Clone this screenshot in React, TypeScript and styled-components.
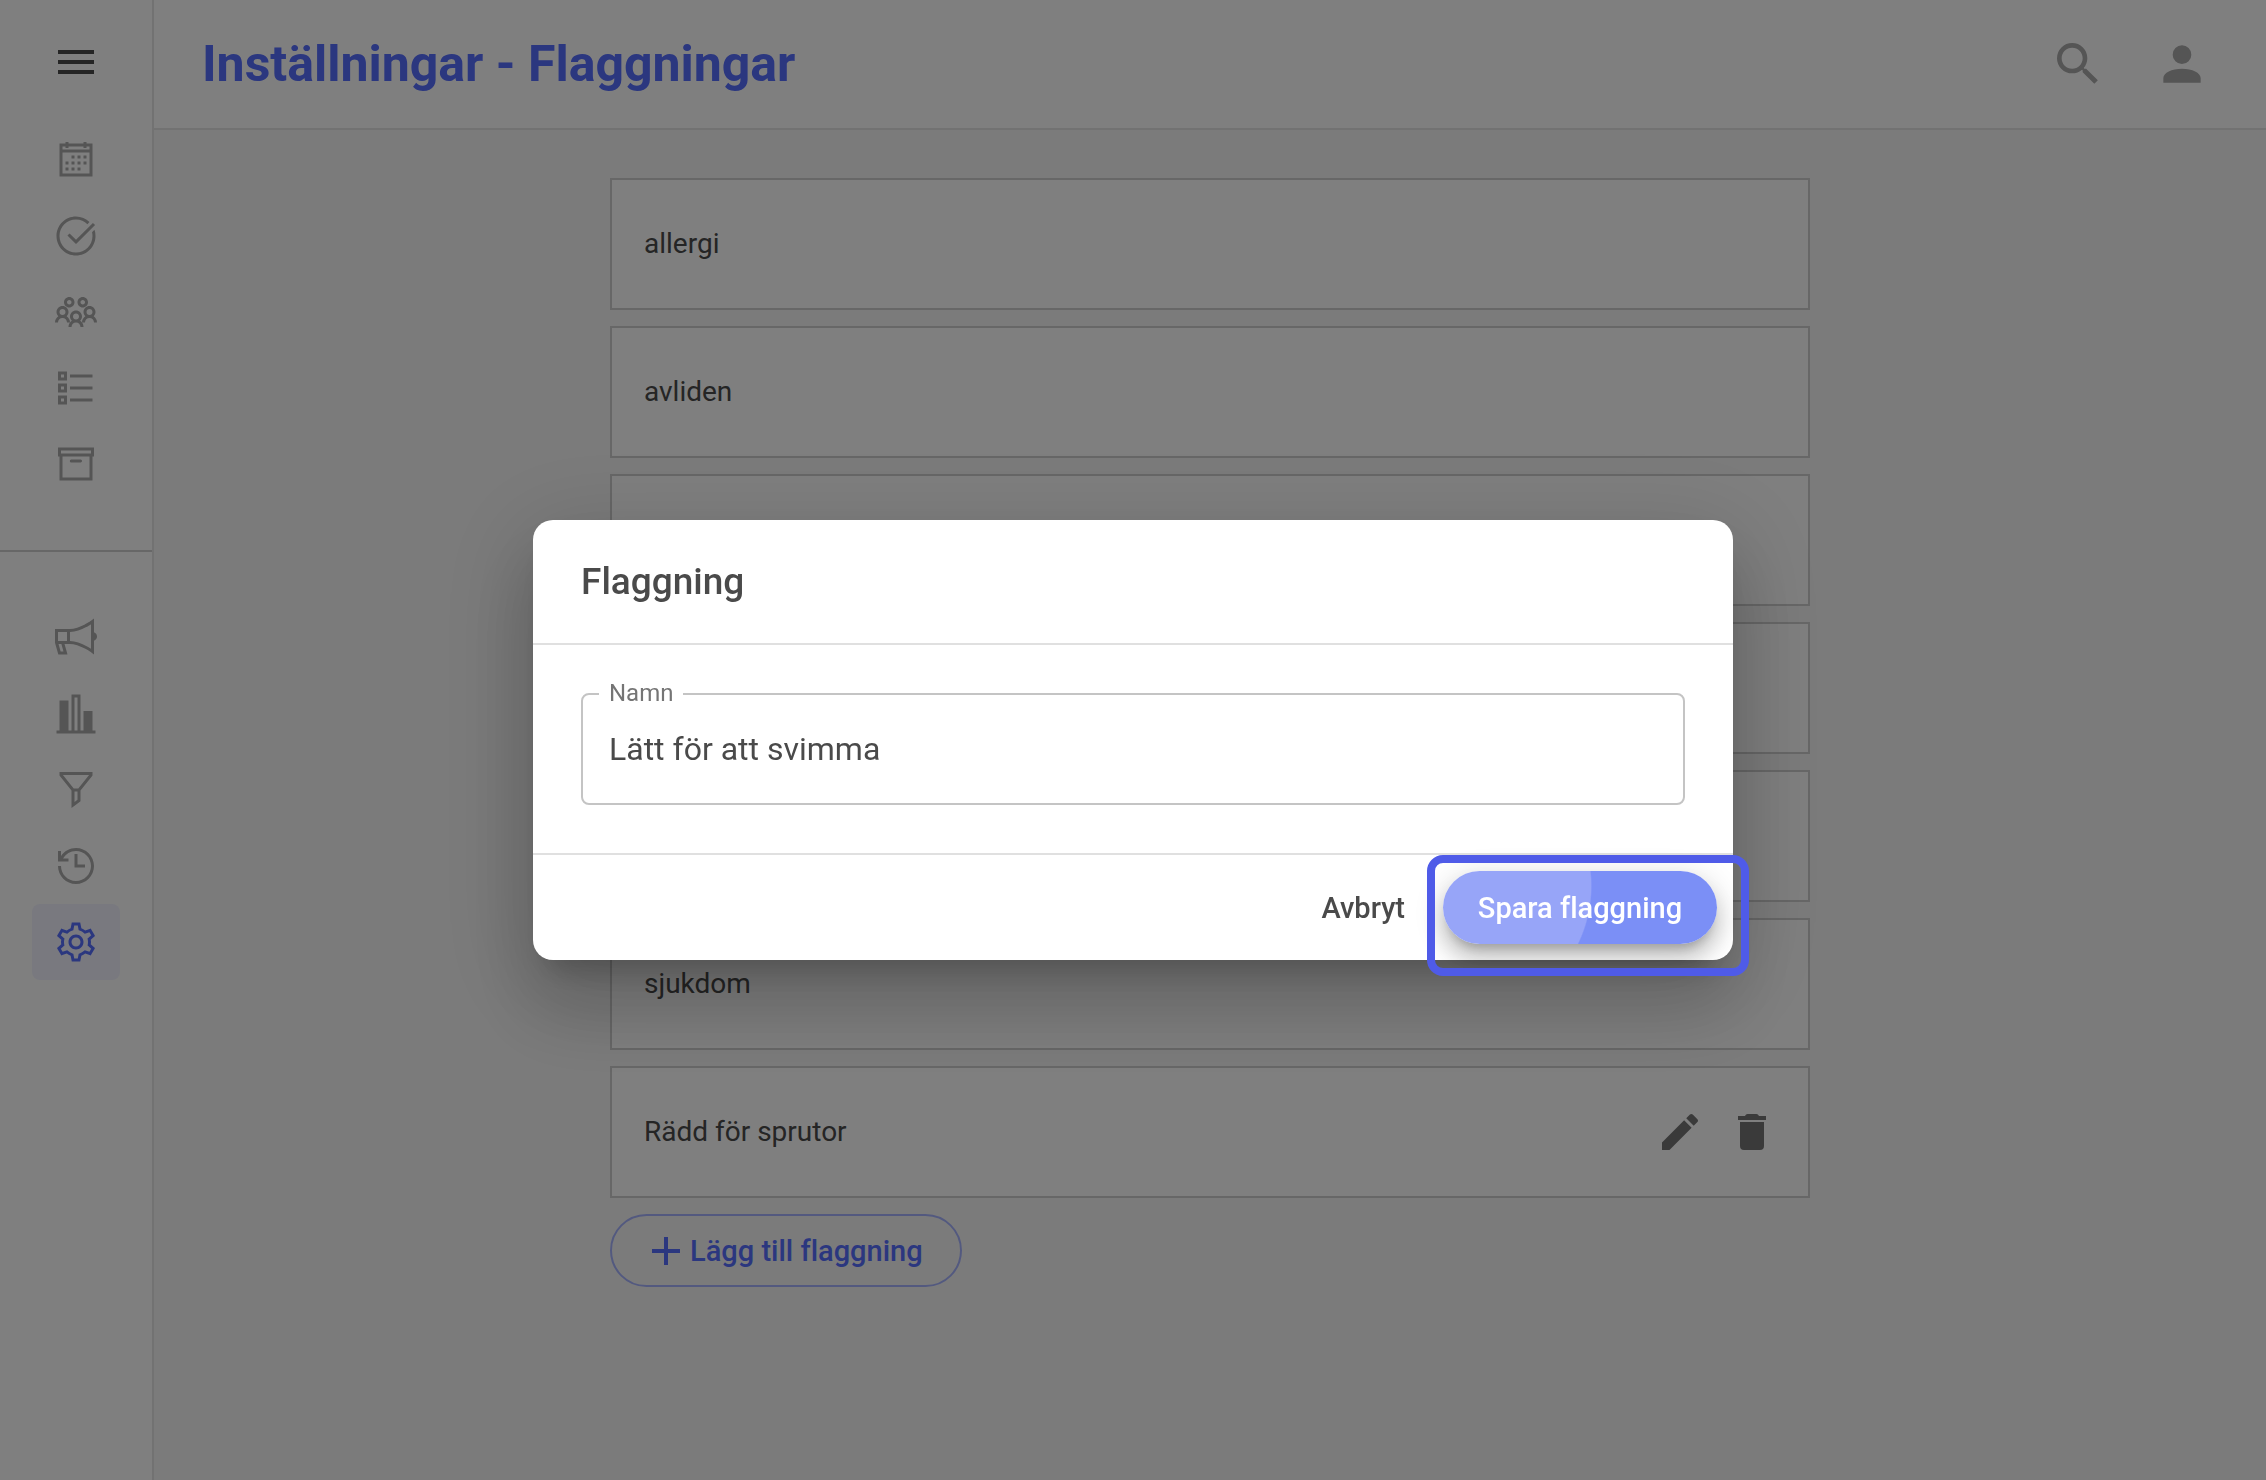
import React, { useState } from 'react';
import styled, { createGlobalStyle } from 'styled-components';
import {
  LiaCalendar,
  LiaCheckCircle,
  LiaUsersSolid,
  LiaListSolid,
  LiaArchiveSolid,
  LiaBullhornSolid,
  LiaFilterSolid,
  LiaHistorySolid,
  LiaCogSolid,
} from 'react-icons/lia';

const GlobalStyle = createGlobalStyle`
  *, *::before, *::after { box-sizing: border-box; }
  body { margin: 0; background: #f7f7f7; }
  body, button, input { font-family: Roboto, 'Liberation Sans', sans-serif; }
  button { margin: 0; padding: 0; border: 0; background: none; color: inherit; cursor: pointer; }
  svg { display: block; }
`;

const Shell = styled.div`
  display: flex;
  min-height: 100vh;
  color: #4a4a4a;
`;

const Sidebar = styled.aside`
  display: flex;
  flex: none;
  flex-direction: column;
  width: 154px;
  background: #fff;
  border-right: 2px solid #e4e4e4;
`;

const MenuButton = styled.button`
  display: grid;
  place-items: center;
  height: 122px;
  padding-top: 2px;
`;

const NavGroup = styled.nav`
  display: flex;
  flex-direction: column;
  align-items: center;
  & + & {
    margin-top: 48px;
    padding-top: 48px;
    border-top: 2px solid #cecece;
  }
`;

const NavItem = styled.a<{ $active?: boolean }>`
  display: grid;
  place-items: center;
  width: 88px;
  height: 76px;
  border-radius: 8px;
  font-size: 48px;
  color: ${(p) => (p.$active ? '#566eff' : '#aaa')};
  background: ${(p) => (p.$active ? '#f2f3fe' : 'transparent')};
`;

const Page = styled.div`
  display: flex;
  flex: 1;
  flex-direction: column;
  min-width: 0;
`;

const TopBar = styled.header`
  display: flex;
  align-items: center;
  justify-content: space-between;
  height: 130px;
  padding: 0 56px 0 48px;
  background: #fff;
  border-bottom: 2px solid #e4e4e4;
`;

const PageTitle = styled.h1`
  margin: 0;
  font-size: 50px;
  font-weight: 700;
  line-height: 64px;
  color: #566eff;
`;

const Actions = styled.div<{ $gap: number; $color: string }>`
  display: flex;
  gap: ${(p) => p.$gap}px;
  color: ${(p) => p.$color};
`;

const Content = styled.main`
  display: flex;
  flex-direction: column;
  align-items: flex-start;
  gap: 16px;
  width: 100%;
  max-width: 1200px;
  margin: 0 auto;
  padding: 48px 0;
`;

const FlagList = styled.ul`
  display: flex;
  flex-direction: column;
  gap: 16px;
  width: 100%;
  margin: 0;
  padding: 0;
  list-style: none;
`;

const FlagCard = styled.li`
  display: flex;
  align-items: center;
  justify-content: space-between;
  height: 132px;
  padding: 0 32px;
  background: #fff;
  border: 2px solid #cecece;
`;

const FlagName = styled.span`
  padding-bottom: 2px;
  font-size: 28px;
  font-variant-ligatures: none;
`;

const PillButton = styled.button<{ $kind: 'outlined' | 'text' | 'filled' }>`
  display: inline-flex;
  align-items: center;
  justify-content: center;
  height: 73px;
  padding: 0 32px;
  font-size: 29px;
  font-weight: 500;
  font-variant-ligatures: none;
  border-radius: 37px;
  ${(p) =>
    p.$kind === 'outlined' &&
    `
    justify-content: flex-start;
    min-width: 352px;
    padding: 0 30px;
    color: #566eff;
    border: 2px solid #a6b3ff;
  `}
  ${(p) =>
    p.$kind === 'text' &&
    `
    padding: 0 22px;
    color: #4a4a4a;
  `}
  ${(p) =>
    p.$kind === 'filled' &&
    `
    min-width: 274px;
    color: #fff;
    background: radial-gradient(circle 133px at 16px 15px, #97a5f8 99%, #7b8ff6 100%);
    box-shadow: 0 10px 10px -6px rgba(0, 0, 0, 0.2), 0 16px 20px 2px rgba(0, 0, 0, 0.14),
      0 6px 28px 4px rgba(0, 0, 0, 0.12);
  `}
`;

const Backdrop = styled.div`
  position: fixed;
  inset: 0;
  display: flex;
  align-items: center;
  justify-content: center;
  background: rgba(0, 0, 0, 0.5);
`;

const Dialog = styled.form`
  width: 1200px;
  max-width: 90%;
  color: #4a4a4a;
  background: #fff;
  border-radius: 20px;
  box-shadow: 0 22px 30px -14px rgba(0, 0, 0, 0.2), 0 48px 76px 6px rgba(0, 0, 0, 0.14),
    0 18px 92px 16px rgba(0, 0, 0, 0.12);
`;

const DialogTitle = styled.h2`
  margin: 0;
  padding: 40px 48px;
  font-size: 37px;
  font-weight: 500;
  line-height: 43px;
  border-bottom: 2px solid #e0e0e0;
`;

const DialogBody = styled.div`
  padding: 48px;
  border-bottom: 2px solid #e0e0e0;
`;

const Field = styled.div`
  position: relative;
`;

const FieldLabel = styled.label`
  position: absolute;
  top: -12px;
  left: 18px;
  padding: 0 10px;
  font-size: 24px;
  line-height: 24px;
  color: #757575;
  background: #fff;
`;

const FieldInput = styled.input`
  display: block;
  width: 100%;
  height: 112px;
  padding: 0 26px;
  font-size: 32px;
  color: #4a4a4a;
  background: #fff;
  border: 2px solid #c4c4c4;
  border-radius: 8px;
  outline: none;
`;

const DialogActions = styled.div`
  display: flex;
  justify-content: flex-end;
  gap: 16px;
  padding: 16px;
`;

const Highlighted = styled.div`
  position: relative;
  display: flex;
  &::after {
    content: '';
    position: absolute;
    inset: -16px -32px -32px -16px;
    border: 8px solid #4f5be8;
    border-radius: 16px;
    pointer-events: none;
  }
`;

const PATHS = {
  search:
    'M9.5,3A6.5,6.5 0 0,1 16,9.5C16,11.11 15.41,12.59 14.44,13.73L14.71,14H15.5L20.5,19L19,20.5L14,15.5V14.71L13.73,14.44C12.59,15.41 11.11,16 9.5,16A6.5,6.5 0 0,1 3,9.5A6.5,6.5 0 0,1 9.5,3M9.5,5C7,5 5,7 5,9.5C5,12 7,14 9.5,14C12,14 14,12 14,9.5C14,7 12,5 9.5,5Z',
  account:
    'M12,4A4,4 0 0,1 16,8A4,4 0 0,1 12,12A4,4 0 0,1 8,8A4,4 0 0,1 12,4M12,14C16.42,14 20,15.79 20,18V20H4V18C4,15.79 7.58,14 12,14Z',
  pencil:
    'M20.71,7.04C21.1,6.65 21.1,6 20.71,5.63L18.37,3.29C18,2.9 17.35,2.9 16.96,3.29L15.12,5.12L18.87,8.87M3,17.25V21H6.75L17.81,9.93L14.06,6.18L3,17.25Z',
  trash:
    'M19,4H15.5C15.2,3.4 14.8,3 14.2,3H9.8C9.2,3 8.8,3.4 8.5,4H5V6H19M6,19A2,2 0 0,0 8,21H16A2,2 0 0,0 18,19V7H6V19Z',
  plus: 'M19,13H13V19H11V13H5V11H11V5H13V11H19V13Z',
  menu: 'M3,6H21V8H3V6M3,11H21V13H3V11M3,16H21V18H3V16Z',
};

function Icon({ name, size }: { name: keyof typeof PATHS; size: number }) {
  return (
    <svg width={size} height={size} viewBox="0 0 24 24" fill="currentColor" aria-hidden="true">
      <path d={PATHS[name]} />
    </svg>
  );
}

function StatisticsIcon() {
  return (
    <svg width="48" height="48" viewBox="0 0 32 32" fill="currentColor" aria-hidden="true">
      <path d="M5 7H11V27H13V3H19V27H21V14H27V27H29V29H3V27H5ZM15 5V27H17V5Z" fillRule="evenodd" />
    </svg>
  );
}

const primaryNav = [
  { label: 'Kalender', Glyph: LiaCalendar },
  { label: 'Uppgifter', Glyph: LiaCheckCircle },
  { label: 'Grupper', Glyph: LiaUsersSolid },
  { label: 'Listor', Glyph: LiaListSolid },
  { label: 'Arkiv', Glyph: LiaArchiveSolid },
];

const secondaryNav = [
  { label: 'Utskick', Glyph: LiaBullhornSolid },
  { label: 'Statistik', Glyph: StatisticsIcon },
  { label: 'Filter', Glyph: LiaFilterSolid },
  { label: 'Historik', Glyph: LiaHistorySolid },
  { label: 'Inställningar', Glyph: LiaCogSolid, active: true },
];

const flags = [
  { name: 'allergi' },
  { name: 'avliden' },
  { name: '' },
  { name: '' },
  { name: '' },
  { name: 'sjukdom' },
  { name: 'Rädd för sprutor', editable: true },
];

export default function App() {
  const [name, setName] = useState('Lätt för att svimma');

  return (
    <>
      <GlobalStyle />
      <Shell>
        <Sidebar>
          <MenuButton type="button" aria-label="Meny">
            <Icon name="menu" size={48} />
          </MenuButton>
          <NavGroup>
            {primaryNav.map(({ label, Glyph }) => (
              <NavItem key={label} href="#" aria-label={label}>
                <Glyph />
              </NavItem>
            ))}
          </NavGroup>
          <NavGroup>
            {secondaryNav.map(({ label, Glyph, active }) => (
              <NavItem key={label} href="#" aria-label={label} $active={active}>
                <Glyph />
              </NavItem>
            ))}
          </NavGroup>
        </Sidebar>
        <Page>
          <TopBar>
            <PageTitle>Inställningar - Flaggningar</PageTitle>
            <Actions $gap={48} $color="#aaa">
              <button type="button" aria-label="Sök">
                <Icon name="search" size={56} />
              </button>
              <button type="button" aria-label="Konto">
                <Icon name="account" size={56} />
              </button>
            </Actions>
          </TopBar>
          <Content>
            <FlagList>
              {flags.map((flag, i) => (
                <FlagCard key={i}>
                  <FlagName>{flag.name}</FlagName>
                  {flag.editable && (
                    <Actions $gap={24} $color="#757575">
                      <button type="button" aria-label="Redigera">
                        <Icon name="pencil" size={48} />
                      </button>
                      <button type="button" aria-label="Ta bort">
                        <Icon name="trash" size={48} />
                      </button>
                    </Actions>
                  )}
                </FlagCard>
              ))}
            </FlagList>
            <PillButton type="button" $kind="outlined">
              <Icon name="plus" size={48} />
              Lägg till flaggning
            </PillButton>
          </Content>
        </Page>
      </Shell>
      <Backdrop>
        <Dialog role="dialog" aria-labelledby="dialog-title" onSubmit={(e) => e.preventDefault()}>
          <DialogTitle id="dialog-title">Flaggning</DialogTitle>
          <DialogBody>
            <Field>
              <FieldInput id="flag-name" value={name} onChange={(e) => setName(e.target.value)} />
              <FieldLabel htmlFor="flag-name">Namn</FieldLabel>
            </Field>
          </DialogBody>
          <DialogActions>
            <PillButton type="button" $kind="text">
              Avbryt
            </PillButton>
            <Highlighted>
              <PillButton type="submit" $kind="filled">
                Spara flaggning
              </PillButton>
            </Highlighted>
          </DialogActions>
        </Dialog>
      </Backdrop>
    </>
  );
}
